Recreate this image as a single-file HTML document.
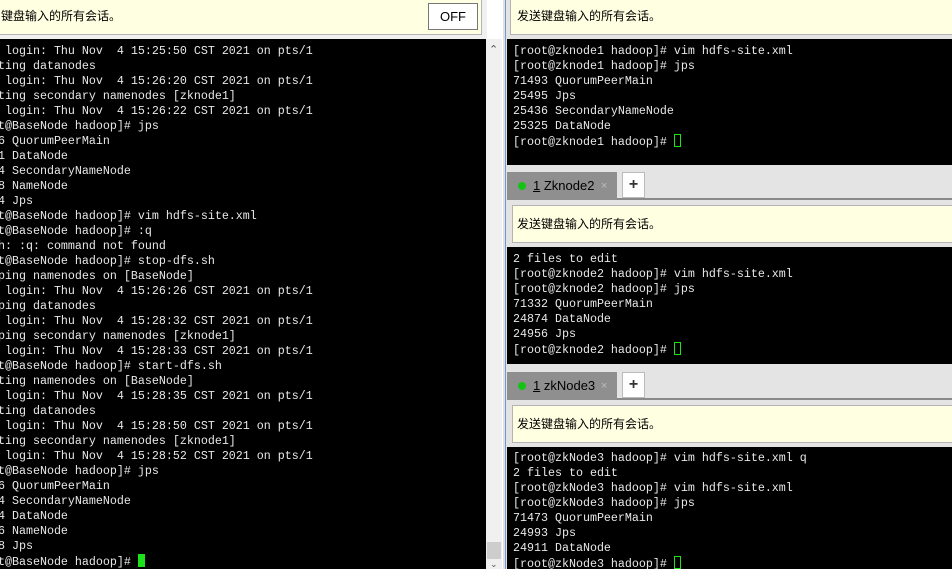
<!DOCTYPE html>
<html><head><meta charset="utf-8"><style>
*{margin:0;padding:0;box-sizing:border-box}
body{width:952px;height:569px;overflow:hidden;background:#fff;position:relative;font-family:"Liberation Sans","Noto Sans CJK SC",sans-serif}
.abs{position:absolute}
.note{background:#ffffe1;border:1px solid #b4b4b4;font-size:12px;color:#000;line-height:14px}
.term{background:#000;color:#e8e8e8;font-family:"Liberation Mono","DejaVu Sans Mono",monospace;font-size:11.67px;line-height:15px;white-space:pre;overflow:hidden}
.cur{display:inline-block;width:7px;height:13px;border:1px solid #1be21b;vertical-align:-2px}
.curf{display:inline-block;width:7px;height:13px;background:#1be21b;vertical-align:-2px}
.tabbar{background:#e4e4e4;border-bottom:2px solid #8a8a8a}
.tab{background:#8f8f8f;color:#000;font-size:13px;line-height:28px;padding-left:26px}
.dot{position:absolute;left:11px;top:10px;width:8px;height:8px;border-radius:50%;background:#16c216}
.x{position:absolute;left:94px;top:0;color:#bdbdbd;font-size:11px}
.plus{background:#fff;border:1px solid #bbb;font-size:16px;font-weight:bold;text-align:center;line-height:20px;color:#333}
</style></head><body>
<div class="abs" style="left:0;top:0;width:487px;height:39px;background:#f0f0f0"></div>
<div class="abs note" style="left:-2px;top:-2px;width:484px;height:37px;padding:10px 0 0 2px">键盘输入的所有会话。</div>
<div class="abs" style="left:428px;top:3px;width:50px;height:27px;border:1px solid #777;background:#fff;font-size:13px;text-align:center;line-height:25px">OFF</div>
<div class="abs term" style="left:0;top:39px;width:486px;height:530px;padding:5px 0 0 0"><div style="margin-left:-30px">Last login: Thu Nov  4 15:25:50 CST 2021 on pts/1
Starting datanodes
Last login: Thu Nov  4 15:26:20 CST 2021 on pts/1
Starting secondary namenodes [zknode1]
Last login: Thu Nov  4 15:26:22 CST 2021 on pts/1
[root@BaseNode hadoop]# jps
71516 QuorumPeerMain
24051 DataNode
24114 SecondaryNameNode
24018 NameNode
24564 Jps
[root@BaseNode hadoop]# vim hdfs-site.xml
[root@BaseNode hadoop]# :q
-bash: :q: command not found
[root@BaseNode hadoop]# stop-dfs.sh
Stopping namenodes on [BaseNode]
Last login: Thu Nov  4 15:26:26 CST 2021 on pts/1
Stopping datanodes
Last login: Thu Nov  4 15:28:32 CST 2021 on pts/1
Stopping secondary namenodes [zknode1]
Last login: Thu Nov  4 15:28:33 CST 2021 on pts/1
[root@BaseNode hadoop]# start-dfs.sh
Starting namenodes on [BaseNode]
Last login: Thu Nov  4 15:28:35 CST 2021 on pts/1
Starting datanodes
Last login: Thu Nov  4 15:28:50 CST 2021 on pts/1
Starting secondary namenodes [zknode1]
Last login: Thu Nov  4 15:28:52 CST 2021 on pts/1
[root@BaseNode hadoop]# jps
71516 QuorumPeerMain
24714 SecondaryNameNode
25024 DataNode
24936 NameNode
25438 Jps
[root@BaseNode hadoop]# <span class="curf"></span></div></div>
<div class="abs" style="left:486px;top:39px;width:16px;height:530px;background:#f0f0f0"></div>
<div class="abs" style="left:489px;top:43px;font-size:11px;color:#555">&#8963;</div>
<div class="abs" style="left:487px;top:542px;width:14px;height:17px;background:#cdcdcd"></div>
<div class="abs" style="left:490px;top:559px;font-size:9px;color:#555">&#8964;</div>
<div class="abs" style="left:503px;top:0;width:3px;height:569px;background:#e0e0e0"></div>
<div class="abs" style="left:505px;top:0;width:1px;height:569px;background:#6f9ad0"></div>
<div class="abs" style="left:506px;top:0;width:446px;height:569px;background:#e4e4e4"></div>
<div class="abs note" style="left:510px;top:-2px;width:444px;height:37px;padding:10px 0 0 6px">发送键盘输入的所有会话。</div>
<div class="abs term" style="left:507px;top:39px;width:445px;height:126px;padding:5px 0 0 6px">[root@zknode1 hadoop]# vim hdfs-site.xml
[root@zknode1 hadoop]# jps
71493 QuorumPeerMain
25495 Jps
25436 SecondaryNameNode
25325 DataNode
[root@zknode1 hadoop]# <span class="cur"></span></div>
<div class="abs tabbar" style="left:507px;top:165px;width:445px;height:35px"></div>
<div class="abs tab" style="left:507px;top:172px;width:110px;height:28px"><span class="dot"></span><u>1</u> Zknode2<span class="x">×</span></div>
<div class="abs plus" style="left:622px;top:172px;width:23px;height:26px;line-height:24px">+</div>
<div class="abs note" style="left:512px;top:205px;width:442px;height:38px;padding:11px 0 0 4px">发送键盘输入的所有会话。</div>
<div class="abs term" style="left:507px;top:247px;width:445px;height:117px;padding:5px 0 0 6px">2 files to edit
[root@zknode2 hadoop]# vim hdfs-site.xml
[root@zknode2 hadoop]# jps
71332 QuorumPeerMain
24874 DataNode
24956 Jps
[root@zknode2 hadoop]# <span class="cur"></span></div>
<div class="abs tabbar" style="left:507px;top:364px;width:445px;height:36px"></div>
<div class="abs tab" style="left:507px;top:372px;width:110px;height:28px"><span class="dot"></span><u>1</u> zkNode3<span class="x">×</span></div>
<div class="abs plus" style="left:622px;top:372px;width:23px;height:26px;line-height:24px">+</div>
<div class="abs note" style="left:512px;top:405px;width:442px;height:38px;padding:11px 0 0 4px">发送键盘输入的所有会话。</div>
<div class="abs term" style="left:507px;top:447px;width:445px;height:122px;padding:4px 0 0 6px">[root@zkNode3 hadoop]# vim hdfs-site.xml q
2 files to edit
[root@zkNode3 hadoop]# vim hdfs-site.xml
[root@zkNode3 hadoop]# jps
71473 QuorumPeerMain
24993 Jps
24911 DataNode
[root@zkNode3 hadoop]# <span class="cur"></span></div>
</body></html>
